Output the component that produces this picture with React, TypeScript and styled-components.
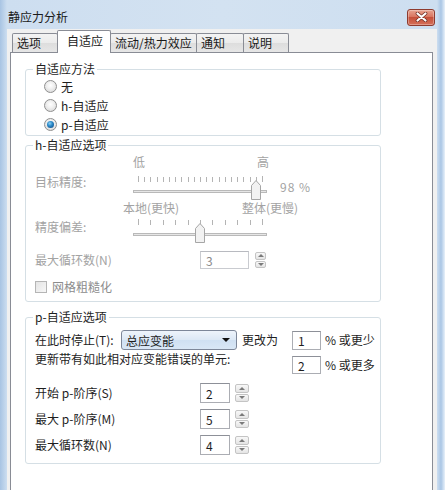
import styled, { createGlobalStyle } from "styled-components";

const GlobalStyle = createGlobalStyle`
  html, body {
    margin: 0;
    padding: 0;
  }
  body {
    font-family: "Noto Sans CJK SC", "Liberation Sans", sans-serif;
    font-size: 12px;
    color: #1e1e1e;
  }
`;

const Window = styled.div`
  width: 445px;
  height: 490px;
  overflow: hidden;
  box-sizing: border-box;
  padding: 0 8px 0 7px;
  display: flex;
  flex-direction: column;
  background: linear-gradient(
    to right,
    #a8c4e3 0,
    #cddef0 7px,
    #d3e2f1 50%,
    #cddef0 calc(100% - 8px),
    #aac6e5 calc(100% - 4px),
    #e8f1fa 100%
  );
`;

const TitleBar = styled.div`
  height: 29px;
  flex: none;
  box-sizing: border-box;
  padding-top: 5px;
  display: flex;
  align-items: center;
  justify-content: space-between;
`;

const Title = styled.span`
  margin-left: 1px;
  line-height: 16px;
  color: #1a1a1a;
`;

const CloseButton = styled.div`
  width: 28px;
  height: 17px;
  box-sizing: border-box;
  margin-right: 2px;
  border: 1px solid #8e3b2f;
  border-radius: 3px;
  display: flex;
  align-items: center;
  justify-content: center;
  background: linear-gradient(#e7a390 0, #d97560 45%, #c5503a 50%, #d5705a 100%);
  box-shadow: inset 0 0 0 1px rgba(255, 255, 255, 0.3);
`;

const Client = styled.div`
  flex: 1;
  display: flex;
  flex-direction: column;
  background: #f0f0f0;
  padding: 0 4px 0 3px;
`;

const TabRow = styled.div`
  display: flex;
  align-items: flex-end;
  height: 23px;
  margin-top: 1px;
  margin-bottom: -1px;
  padding-left: 2px;
  position: relative;
  z-index: 1;
`;

const Tab = styled.div<{ $w: number; $active?: boolean }>`
  width: ${(p) => p.$w}px;
  box-sizing: border-box;
  height: ${(p) => (p.$active ? 23 : 19)}px;
  margin-bottom: ${(p) => (p.$active ? 0 : 1)}px;
  margin-left: -1px;
  padding-left: ${(p) => (p.$active ? 9 : 4)}px;
  border: 1px solid #898c95;
  border-bottom: none;
  border-radius: 2px 2px 0 0;
  line-height: ${(p) => (p.$active ? 19 : 18)}px;
  white-space: nowrap;
  color: #1a1a1a;
  background: ${(p) =>
    p.$active ? "#ffffff" : "linear-gradient(#f3f3f3, #ebebeb 50%, #dddddd 51%, #e6e6e6)"};
  position: relative;
  z-index: ${(p) => (p.$active ? 2 : 1)};

  &:first-child {
    margin-left: 0;
  }
`;

const Panel = styled.div`
  flex: 1;
  background: #ffffff;
  border: 1px solid #898c95;
  border-bottom: none;
  padding: 8px 0 0 14px;
  display: flex;
  flex-direction: column;
`;

const Group = styled.fieldset<{ $mt?: number }>`
  width: 356px;
  box-sizing: border-box;
  margin: ${(p) => p.$mt ?? 0}px 0 0 0;
  padding: 0;
  min-width: 0;
  border: 1px solid #d5dfe5;
  border-radius: 3px;
`;

const Legend = styled.legend`
  margin-left: 7px;
  padding: 0 2px;
  line-height: 16px;
  color: #1e1e1e;
`;

const GroupBody = styled.div<{ $pad: string }>`
  padding: ${(p) => p.$pad};
  display: flex;
  flex-direction: column;
`;

const RadioRow = styled.div`
  height: 19px;
  display: flex;
  align-items: center;
  gap: 4px;
`;

const RadioDot = styled.span<{ $on?: boolean }>`
  width: 13px;
  height: 13px;
  box-sizing: border-box;
  border-radius: 50%;
  border: 1px solid #8f8f8f;
  background: radial-gradient(circle at 50% 40%, #ffffff 0, #f0f0f0 40%, #d2d2d2 100%);
  display: flex;
  align-items: center;
  justify-content: center;

  &::after {
    content: "";
    display: ${(p) => (p.$on ? "block" : "none")};
    width: 7px;
    height: 7px;
    border-radius: 50%;
    background: radial-gradient(circle at 40% 35%, #8fd0f5 0, #2c8bc9 40%, #0d3f7a 100%);
  }
`;

const SliderBlock = styled.div<{ $gap: number; $labelTop: number }>`
  display: grid;
  grid-template-columns: 88px 150px auto;
  grid-template-rows: 16px 24px;
  row-gap: ${(p) => p.$gap}px;

  & > .label {
    grid-column: 1;
    grid-row: 2;
    margin-top: ${(p) => p.$labelTop}px;
    line-height: 16px;
    color: #a3a3a3;
  }
`;

const EndLabels = styled.div<{ $inset: number; $w: number }>`
  grid-column: 2 / 4;
  grid-row: 1;
  margin-left: ${(p) => p.$inset}px;
  width: ${(p) => p.$w}px;
  display: flex;
  justify-content: space-between;
  line-height: 16px;
  color: #a3a3a3;
  white-space: nowrap;
`;

const SliderValue = styled.span`
  grid-column: 3;
  grid-row: 2;
  padding-left: 7px;
  margin-top: 3px;
  line-height: 16px;
  color: #a3a3a3;
  letter-spacing: 1px;
`;

const FieldRow = styled.div<{ $h: number; $mt: number; $dim?: boolean }>`
  height: ${(p) => p.$h}px;
  margin-top: ${(p) => p.$mt}px;
  display: flex;
  align-items: center;
  color: ${(p) => (p.$dim ? "#a3a3a3" : "#1e1e1e")};
`;

const FieldLabel = styled.span<{ $w: number }>`
  width: ${(p) => p.$w}px;
  flex: none;
  white-space: nowrap;
  line-height: 16px;
`;

const TextBox = styled.div<{ $w: number; $h: number; $dim?: boolean }>`
  width: ${(p) => p.$w}px;
  height: ${(p) => p.$h}px;
  box-sizing: border-box;
  border: 1px solid ${(p) => (p.$dim ? "#c9cbd0" : "#abadb3")};
  border-top-color: ${(p) => (p.$dim ? "#b8bac0" : "#8d9098")};
  background: #ffffff;
  padding-left: 5px;
  display: flex;
  align-items: center;
  color: ${(p) => (p.$dim ? "#8a8a8a" : "#1e1e1e")};
`;

const Spinner = styled.div<{ $w: number; $h: number; $ml: number }>`
  width: ${(p) => p.$w}px;
  height: ${(p) => p.$h}px;
  margin-left: ${(p) => p.$ml}px;
  display: flex;
  flex-direction: column;
  gap: 1px;
`;

const SpinHalf = styled.div<{ $down?: boolean }>`
  flex: 1;
  box-sizing: border-box;
  border: 1px solid #c4c4c4;
  border-radius: 2px;
  background: linear-gradient(#f8f8f8, #e4e4e4);
  display: flex;
  align-items: center;
  justify-content: center;

  &::after {
    content: "";
    width: 0;
    height: 0;
    border-left: 3px solid transparent;
    border-right: 3px solid transparent;
    ${(p) => (p.$down ? "border-top: 3px solid #7a7a7a;" : "border-bottom: 3px solid #7a7a7a;")}
  }
`;

const CheckBox = styled.span`
  width: 12px;
  height: 12px;
  box-sizing: border-box;
  border: 1px solid #b5b5b5;
  background: linear-gradient(135deg, #e4e4e4, #f7f7f7);
  margin-right: 5px;
`;

const CheckText = styled.span`
  color: #8c8c8c;
  line-height: 16px;
`;

const PGrid = styled.div`
  display: grid;
  grid-template-columns: 86px 116px 55px 29px auto;
  grid-template-rows: 20px 24px;
  align-items: center;
`;

const Select = styled.div`
  height: 20px;
  box-sizing: border-box;
  border: 1px solid #7d8799;
  border-radius: 3px;
  background: linear-gradient(#eef4fb, #dce8f5 50%, #cfe0f2 51%, #d9e7f6);
  display: flex;
  align-items: center;
  justify-content: space-between;
  padding: 0 6px 0 4px;

  &::after {
    content: "";
    border-left: 4px solid transparent;
    border-right: 4px solid transparent;
    border-top: 4px solid #111111;
  }
`;

const Cell = styled.span<{ $col: string; $row: number; $top?: number; $pl?: number }>`
  grid-column: ${(p) => p.$col};
  grid-row: ${(p) => p.$row};
  align-self: ${(p) => (p.$top !== undefined ? "start" : "center")};
  margin-top: ${(p) => p.$top ?? 0}px;
  padding-left: ${(p) => p.$pl ?? 0}px;
  white-space: nowrap;
  line-height: 16px;
`;

const SliderTrack = ({ ticks, thumb }: { ticks: number; thumb: number }) => {
  const xs = Array.from({ length: ticks }, (_, i) => 15 + (124 * i) / (ticks - 1));
  return (
    <svg width={150} height={24} viewBox="0 0 150 24" style={{ gridColumn: 2, gridRow: 2 }}>
      {xs.map((x, i) => (
        <line
          key={i}
          x1={Math.round(x) + 0.5}
          x2={Math.round(x) + 0.5}
          y1={i === 0 || i === ticks - 1 ? 0 : 1}
          y2={6}
          stroke="#b4b4b4"
          strokeWidth={1}
        />
      ))}
      <rect x={10.5} y={14.5} width={133} height={2} fill="#e6e6e6" stroke="#b9b9b9" strokeWidth={1} />
      <path
        d={`M${thumb - 4.5} 23.5 V9.5 L${thumb} 4.5 L${thumb + 4.5} 9.5 V23.5 Z`}
        fill="#f2f2f2"
        stroke="#a6a6a6"
        strokeWidth={1}
      />
    </svg>
  );
};

const App = () => {
  return (
    <Window>
      <GlobalStyle />
      <TitleBar>
        <Title>静应力分析</Title>
        <CloseButton>
          <svg width={13} height={10} viewBox="0 0 13 10">
            <path d="M2.5 1.5 L10.5 8.5 M10.5 1.5 L2.5 8.5" stroke="#6b2a20" strokeWidth={3.6} strokeLinecap="round" />
            <path d="M2.5 1.5 L10.5 8.5 M10.5 1.5 L2.5 8.5" stroke="#ffffff" strokeWidth={2.2} strokeLinecap="round" />
          </svg>
        </CloseButton>
      </TitleBar>
      <Client>
        <TabRow>
          <Tab $w={46}>选项</Tab>
          <Tab $w={54} $active>
            自适应
          </Tab>
          <Tab $w={87}>流动/热力效应</Tab>
          <Tab $w={48}>通知</Tab>
          <Tab $w={46}>说明</Tab>
        </TabRow>
        <Panel>
          <Group>
            <Legend>自适应方法</Legend>
            <GroupBody $pad="0 0 1px 18px">
              <RadioRow>
                <RadioDot />
                <span>无</span>
              </RadioRow>
              <RadioRow>
                <RadioDot />
                <span>h-自适应</span>
              </RadioRow>
              <RadioRow>
                <RadioDot $on />
                <span>p-自适应</span>
              </RadioRow>
            </GroupBody>
          </Group>

          <Group $mt={1}>
            <Legend>h-自适应选项</Legend>
            <GroupBody $pad="1px 0 6px 9px">
              <SliderBlock $gap={6} $labelTop={-2}>
                <EndLabels $inset={10} $w={136}>
                  <span>低</span>
                  <span>高</span>
                </EndLabels>
                <span className="label">目标精度:</span>
                <SliderTrack ticks={21} thumb={133} />
                <SliderValue>98 %</SliderValue>
              </SliderBlock>
              <SliderBlock $gap={3} $labelTop={0}>
                <EndLabels $inset={0} $w={175}>
                  <span>本地(更快)</span>
                  <span>整体(更慢)</span>
                </EndLabels>
                <span className="label">精度偏差:</span>
                <SliderTrack ticks={11} thumb={77} />
              </SliderBlock>
              <FieldRow $h={18} $mt={8} $dim>
                <FieldLabel $w={165}>最大循环数(N)</FieldLabel>
                <TextBox $w={49} $h={18} $dim>
                  3
                </TextBox>
                <Spinner $w={11} $h={16} $ml={6}>
                  <SpinHalf />
                  <SpinHalf $down />
                </Spinner>
              </FieldRow>
              <FieldRow $h={16} $mt={10}>
                <CheckBox />
                <CheckText>网格粗糙化</CheckText>
              </FieldRow>
            </GroupBody>
          </Group>

          <Group $mt={7}>
            <Legend>p-自适应选项</Legend>
            <GroupBody $pad="5px 0 8px 9px">
              <PGrid>
                <Cell $col="1" $row={1}>
                  在此时停止(T):
                </Cell>
                <Select style={{ gridColumn: 2, gridRow: 1 }}>总应变能</Select>
                <Cell $col="3" $row={1} $pl={5}>
                  更改为
                </Cell>
                <TextBox $w={29} $h={19} style={{ gridColumn: 4, gridRow: 1 }}>
                  1
                </TextBox>
                <Cell $col="5" $row={1} $pl={4}>
                  % 或更少
                </Cell>
                <Cell $col="1 / 4" $row={2} $top={1}>
                  更新带有如此相对应变能错误的单元:
                </Cell>
                <TextBox $w={29} $h={18} style={{ gridColumn: 4, gridRow: 2, alignSelf: "start", marginTop: 6 }}>
                  2
                </TextBox>
                <Cell $col="5" $row={2} $top={7} $pl={4}>
                  % 或更多
                </Cell>
              </PGrid>
              <FieldRow $h={20} $mt={9}>
                <FieldLabel $w={165}>开始 p-阶序(S)</FieldLabel>
                <TextBox $w={30} $h={20}>
                  2
                </TextBox>
                <Spinner $w={14} $h={18} $ml={5}>
                  <SpinHalf />
                  <SpinHalf $down />
                </Spinner>
              </FieldRow>
              <FieldRow $h={20} $mt={6}>
                <FieldLabel $w={165}>最大 p-阶序(M)</FieldLabel>
                <TextBox $w={30} $h={20}>
                  5
                </TextBox>
                <Spinner $w={14} $h={18} $ml={5}>
                  <SpinHalf />
                  <SpinHalf $down />
                </Spinner>
              </FieldRow>
              <FieldRow $h={20} $mt={6}>
                <FieldLabel $w={165}>最大循环数(N)</FieldLabel>
                <TextBox $w={30} $h={20}>
                  4
                </TextBox>
                <Spinner $w={14} $h={18} $ml={5}>
                  <SpinHalf />
                  <SpinHalf $down />
                </Spinner>
              </FieldRow>
            </GroupBody>
          </Group>
        </Panel>
      </Client>
    </Window>
  );
};

export default App;
